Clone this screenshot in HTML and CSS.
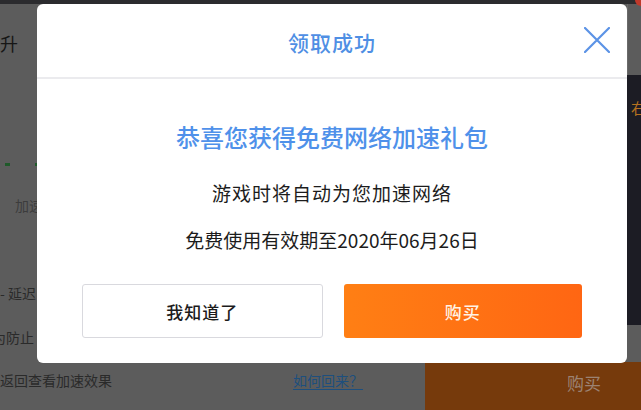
FILE: index.html
```html
<!DOCTYPE html>
<html lang="zh-CN">
<head>
<meta charset="utf-8">
<title>领取成功</title>
<link rel="stylesheet" href="styles.css">
</head>
<body>
<div class="app">
  <div class="topbar"><span class="topbar-dot"></span></div>
  <div class="main">
    <div class="left">
      <div class="row row-title">升</div>
      <div class="row row-dots"><span class="dot"></span><span class="dot"></span></div>
      <div class="row row-speed">加速</div>
      <div class="row row-delay">- 延迟</div>
      <div class="row row-guard">为防止</div>
    </div>
    <div class="right">
      <div class="right-top"></div>
      <div class="right-dark"><span class="right-char">右</span></div>
    </div>
  </div>
  <div class="footer">
    <div class="footer-text">返回查看加速效果</div>
    <a class="footer-link">如何回来？</a>
    <div class="footer-buy">购买</div>
  </div>

  <div class="modal">
    <div class="modal-header">
      <h1 class="modal-title">领取成功</h1>
      <button class="modal-close" aria-label="关闭">
        <svg width="26" height="26" viewBox="0 0 26 26"><path d="M1 1 L25 25 M25 1 L1 25" stroke="#5b93e6" stroke-width="2.2" fill="none" stroke-linecap="round"/></svg>
      </button>
    </div>
    <div class="modal-body">
      <p class="msg-head">恭喜您获得免费网络加速礼包</p>
      <p class="msg-line">游戏时将自动为您加速网络</p>
      <p class="msg-line msg-date">免费使用有效期至2020年06月26日</p>
    </div>
    <div class="modal-actions">
      <button class="btn btn-ghost">我知道了</button>
      <button class="btn btn-buy">购买</button>
    </div>
  </div>
</div>
</body>
</html>
```

FILE: styles.css
```css
* { box-sizing: border-box; }
html, body { margin: 0; padding: 0; }
body {
  font-family: "Noto Sans CJK SC", "Noto Sans", sans-serif;
  background: #5c5c5c;
}
.app {
  position: relative;
  width: 641px;
  height: 410px;
  overflow: hidden;
  background: #5c5c5c;
  display: flex;
  flex-direction: column;
}
.topbar {
  height: 4px;
  background: #2b2b2e;
  position: relative;
}
.topbar-dot {
  position: absolute;
  right: 0;
  top: 0;
  width: 6px;
  height: 6px;
  background: #c0392b;
  border-bottom-left-radius: 6px;
}
.main {
  flex: 1;
  display: flex;
}
.left {
  flex: 1;
  display: flex;
  flex-direction: column;
  color: #1e1e1e;
  font-size: 16px;
}
.row { line-height: 20px; }
.row-title { margin-top: 29px; font-size: 18px; color: #161616; }
.row-dots {
  margin-top: 108px;
  display: flex;
  gap: 25px;
  padding-left: 5px;
  height: 6px;
  align-items: center;
}
.dot { width: 5px; height: 3px; background: #1f5a2a; }
.row-speed { margin-top: 28px; padding-left: 15px; font-size: 14px; color: #3c3c3c; }
.row-delay { margin-top: 68px; font-size: 14px; color: #2a2a2a; padding-left: 0; }
.row-guard { margin-top: 24px; font-size: 14px; color: #2a2a2a; margin-left: -8px; }
.right {
  width: 14px;
  display: flex;
  flex-direction: column;
}
.right-top {
  height: 71px;
  border-left: 1px solid #6a6a6a;
}
.right-dark {
  height: 250px;
  background: #1c1c24;
  overflow: hidden;
  color: #b5711f;
  font-size: 15px;
  padding-top: 22px;
  padding-left: 4px;
  white-space: nowrap;
}
.footer {
  height: 48px;
  display: flex;
  align-items: center;
}
.footer-text {
  width: 293px;
  font-size: 14px;
  color: #2a2a2a;
  padding-bottom: 12px;
}
.footer-link {
  font-size: 14px;
  color: #1d4f7e;
  text-decoration: underline;
  text-underline-offset: 3px;
  padding-bottom: 12px;
}
.footer-buy {
  margin-left: auto;
  width: 216px;
  height: 48px;
  background: #763a0c;
  color: #9c8272;
  font-size: 17px;
  display: flex;
  align-items: center;
  justify-content: flex-end;
  padding-right: 40px;
  padding-bottom: 8px;
}

.modal {
  position: absolute;
  left: 37px;
  top: 4px;
  width: 590px;
  height: 359px;
  background: #ffffff;
  border-radius: 6px;
  display: flex;
  flex-direction: column;
}
.modal-header {
  position: relative;
  height: 75px;
  border-bottom: 2px solid #ebebee;
  display: flex;
  align-items: center;
  justify-content: center;
}
.modal-title {
  margin: 0;
  padding-top: 2px;
  font-size: 21px;
  font-weight: 500;
  color: #4f8fe4;
  letter-spacing: 1px;
}
.modal-close {
  position: absolute;
  right: 17px;
  top: 23px;
  width: 26px;
  height: 26px;
  padding: 0;
  border: 0;
  background: none;
}
.modal-close svg { display: block; }
.modal-body {
  padding-top: 42px;
  display: flex;
  flex-direction: column;
  align-items: center;
}
.msg-head {
  margin: 0;
  font-size: 24px;
  line-height: 32px;
  font-weight: 500;
  color: #4f91ea;
}
.msg-line {
  margin: 26px 0 0;
  font-size: 19px;
  line-height: 28px;
  color: #1c1c1c;
  letter-spacing: 1px;
}
.msg-line.msg-date { margin-top: 19px; letter-spacing: 0; font-size: 19px; }
.modal-actions {
  margin-top: 30px;
  display: flex;
  gap: 21px;
  padding: 0 45px;
}
.btn {
  flex: 1;
  height: 54px;
  border-radius: 3px;
  font-family: inherit;
  font-size: 17px;
  font-weight: 500;
  letter-spacing: 1px;
}
.btn-ghost {
  background: #ffffff;
  border: 1px solid #d9d9de;
  color: #1c1c1c;
}
.btn-buy {
  border: 0;
  background: linear-gradient(90deg, #ff7f14, #ff6613);
  color: #fff3e6;
}
```
